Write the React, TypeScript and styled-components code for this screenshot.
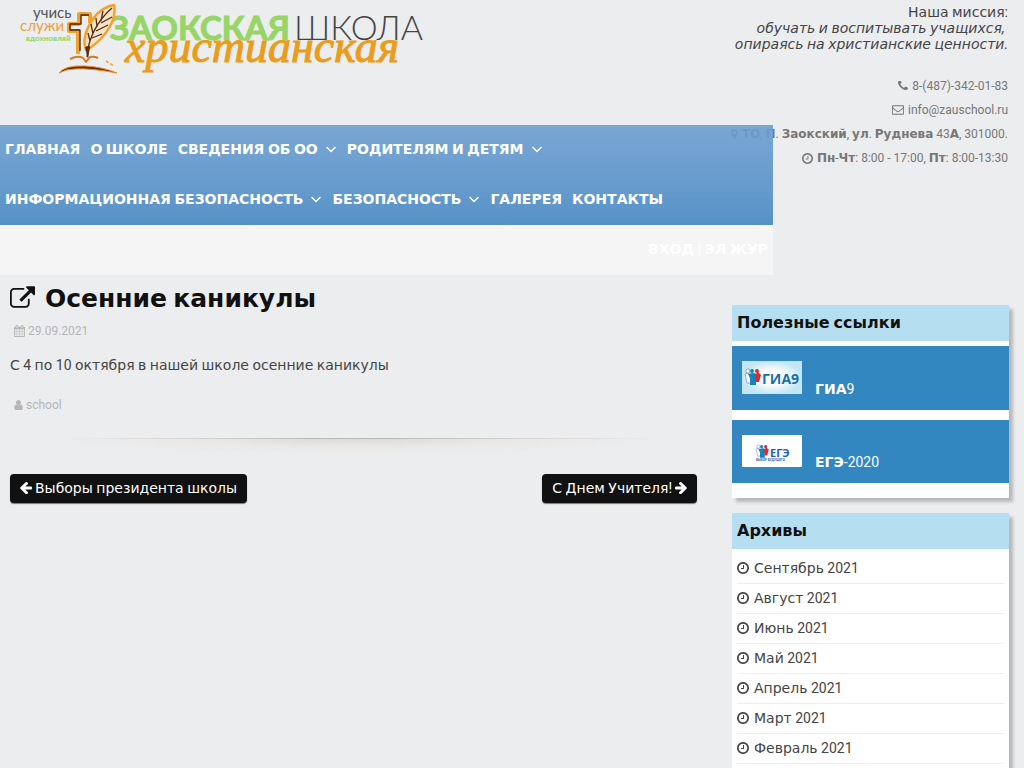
import React from "react";
import styled, { createGlobalStyle, css } from "styled-components";

const GlobalStyle = createGlobalStyle`
  *, *::before, *::after { box-sizing: border-box; }
  body {
    margin: 0;
    background: #ecedef;
    color: #444;
    font-family: Roboto, sans-serif;
    font-size: 14px;
    line-height: 24px;
  }
  a { color: inherit; text-decoration: none; }
  h1, h2, p, ul { margin: 0; padding: 0; }
  ul { list-style: none; }
`;

/* Cyrillic words use DejaVu Sans; digits, Latin and punctuation stay in Roboto. */
const Cyrillic = styled.span<{ $bold?: boolean }>`
  font-family: "DejaVu Sans", sans-serif;
  line-height: 1;
  ${(p) => p.$bold && css`font-weight: 700;`}
`;

function Mixed({ text, bold }: { text: string; bold?: boolean }) {
  return (
    <span>
      {text.split(/([\u0400-\u04FF]+)/).map((part, i) =>
        i % 2 ? (
          <Cyrillic key={i} $bold={bold}>
            {part}
          </Cyrillic>
        ) : (
          part
        )
      )}
    </span>
  );
}

const icons = {
  phone: {
    box: "192 256 1408 1408",
    d: "M1600 1240q0 27-10 70.5t-21 68.5q-21 50-122 106-94 51-186 51-27 0-53-3.5t-57.5-12.5-47-14.5-55.5-20.5-49-18q-98-35-175-83-127-79-264-216t-216-264q-48-77-83-175-3-9-18-49t-20.5-55.5-14.5-47-12.5-57.5-3.5-53q0-92 51-186 56-101 106-122 25-11 68.5-21t70.5-10q14 0 21 3 18 6 53 76 11 19 30 54t35 63.5 31 53.5q3 4 17.5 25t21.5 35.5 7 28.5q0 20-28.5 50t-62 55-62 53-28.5 46q0 9 5 22.5t8.5 20.5 14 24 11.5 19q76 137 174 235t235 174q2 1 19 11.5t24 14 20.5 8.5 22.5 5q18 0 46-28.5t53-62 55-62 50-28.5q14 0 28.5 7t35.5 21.5 25 17.5q25 15 53.5 31t63.5 35 54 30q70 35 76 53 3 7 3 21z",
  },
  envelope: {
    box: "0 128 1792 1664",
    d: "M1664 1504v-768q-32 36-69 66-268 206-426 338-51 43-83 67t-86.5 48.5-102.5 24.5h-2q-48 0-102.5-24.5t-86.5-48.5-83-67q-158-132-426-338-37-30-69-66v768q0 13 9.5 22.5t22.5 9.5h1472q13 0 22.5-9.5t9.5-22.5zm0-1051v-24.5l-.5-13-3-12.5-5.5-9-9-7.5-14-2.5h-1472q-13 0-22.5 9.5t-9.5 22.5q0 168 147 284 193 152 401 317 6 5 35 29.5t46 37.5 44.5 31.5 50.5 27.5 43 9h2q20 0 43-9t50.5-27.5 44.5-31.5 46-37.5 35-29.5q208-165 401-317 54-43 100.5-115.5t46.5-131.5zm128-37v1088q0 66-47 113t-113 47h-1472q-66 0-113-47t-47-113v-1088q0-66 47-113t113-47h1472q66 0 113 47t47 113z",
  },
  marker: {
    box: "384 128 1024 1536",
    d: "M1152 640q0-106-75-181t-181-75-181 75-75 181 75 181 181 75 181-75 75-181zm256 0q0 109-33 179l-364 774q-16 33-47.5 52t-67.5 19-67.5-19-46.5-52l-365-774q-33-70-33-179 0-212 150-362t362-150 362 150 150 362z",
  },
  clock: {
    box: "128 128 1536 1536",
    d: "M1024 544v448q0 14-9 23t-23 9h-320q-14 0-23-9t-9-23v-64q0-14 9-23t23-9h224v-352q0-14 9-23t23-9h64q14 0 23 9t9 23zm416 352q0-148-73-273t-198-198-273-73-273 73-198 198-73 273 73 273 198 198 273 73 273-73 198-198 73-273zm224 0q0 209-103 385.5t-279.5 279.5-385.5 103-385.5-103-279.5-279.5-103-385.5 103-385.5 279.5-279.5 385.5-103 385.5 103 279.5 279.5 103 385.5z",
  },
  calendar: {
    box: "64 0 1664 1792",
    d: "M192 1664h288v-288h-288v288zm352 0h320v-288h-320v288zm-352-352h288v-320h-288v320zm352 0h320v-320h-320v320zm-352-384h288v-288h-288v288zm736 736h320v-288h-320v288zm-384-736h320v-288h-320v288zm768 736h288v-288h-288v288zm-384-352h320v-320h-320v320zm-352-864v-288q0-13-9.5-22.5t-22.5-9.5h-64q-13 0-22.5 9.5t-9.5 22.5v288q0 13 9.5 22.5t22.5 9.5h64q13 0 22.5-9.5t9.5-22.5zm736 864h288v-320h-288v320zm-384-384h320v-288h-320v288zm384 0h288v-288h-288v288zm32-480v-288q0-13-9.5-22.5t-22.5-9.5h-64q-13 0-22.5 9.5t-9.5 22.5v288q0 13 9.5 22.5t22.5 9.5h64q13 0 22.5-9.5t9.5-22.5zm384-64v1280q0 52-38 90t-90 38h-1408q-52 0-90-38t-38-90v-1280q0-52 38-90t90-38h128v-96q0-66 47-113t113-47h64q66 0 113 47t47 113v96h384v-96q0-66 47-113t113-47h64q66 0 113 47t47 113v96h128q52 0 90 38t38 90z",
  },
  user: {
    box: "256 128 1280 1536",
    d: "M1536 1399q0 109-62.5 187t-150.5 78h-854q-88 0-150.5-78t-62.5-187q0-85 8.5-160.5t31.5-152 58.5-131 94-89 134.5-34.5q131 128 313 128t313-128q76 0 134.5 34.5t94 89 58.5 131 31.5 152 8.5 160.5zm-256-887q0 159-112.5 271.5t-271.5 112.5-271.5-112.5-112.5-271.5 112.5-271.5 271.5-112.5 271.5 112.5 112.5 271.5z",
  },
  external: {
    box: "64 61 1792 1536",
    d: "M1472 989v320q0 119-84.5 203.5t-203.5 84.5h-832q-119 0-203.5-84.5t-84.5-203.5v-832q0-119 84.5-203.5t203.5-84.5h704q14 0 23 9t9 23v64q0 14-9 23t-23 9h-704q-66 0-113 47t-47 113v832q0 66 47 113t113 47h832q66 0 113-47t47-113v-320q0-14 9-23t23-9h64q14 0 23 9t9 23zm384-864v512q0 26-19 45t-45 19-45-19l-176-176-652 652q-10 10-23 10t-23-10l-114-114q-10-10-10-23t10-23l652-652-176-176q-19-19-19-45t19-45 45-19h512q26 0 45 19t19 45z",
  },
  arrow: {
    box: "170 200 1500 1500",
    d: "M1664 896v128q0 53-32.5 90.5t-84.5 37.5h-704l293 294q38 36 38 90t-38 90l-75 76q-37 37-90 37-52 0-91-37l-651-652q-37-37-37-90 0-52 37-91l651-650q38-38 91-38 52 0 90 38l75 74q38 38 38 91t-38 91l-293 293h704q52 0 84.5 37.5t32.5 90.5z",
  },
};

const Glyph = styled.svg<{ $flip?: boolean }>`
  flex: none;
  display: block;
  fill: currentColor;
  ${(p) => p.$flip && css`transform: scaleX(-1);`}
`;

function Icon({ name, w, h, flip }: { name: keyof typeof icons; w: number; h: number; flip?: boolean }) {
  return (
    <Glyph viewBox={icons[name].box} width={w} height={h} $flip={flip} aria-hidden="true">
      <path d={icons[name].d} />
    </Glyph>
  );
}

const Page = styled.div`
  min-height: 100vh;
  display: flex;
  flex-direction: column;
`;

const Header = styled.header`
  display: grid;
  grid-template-columns: minmax(0, 1fr) 251px;
  grid-template-rows: 125px auto;
`;

const LogoLink = styled.a`
  grid-area: 1 / 1;
  justify-self: start;
  svg { display: block; }
`;

const HeaderInfo = styled.div`
  grid-area: 1 / 2 / span 2;
  display: flex;
  flex-direction: column;
  align-items: flex-end;
  gap: 22px;
  padding: 4px 16px 0 0;
  white-space: nowrap;
`;

const Mission = styled.p`
  line-height: 16px;
  text-align: right;
  white-space: pre;
`;

const Contacts = styled.address`
  display: flex;
  flex-direction: column;
  align-items: flex-end;
  font-size: 12px;
  font-style: normal;
  color: #777;
`;

const Contact = styled.div`
  display: flex;
  align-items: center;
  gap: 4px;
  height: 24px;
`;

const Nav = styled.nav`
  grid-area: 2 / 1;
  position: relative;
  z-index: 1;
  color: #fff;
  font-weight: 700;
  line-height: 48px;
`;

const Menu = styled.ul`
  display: flex;
  flex-wrap: wrap;
  background: linear-gradient(rgba(108, 159, 208, 0.9), rgba(87, 145, 201, 0.9) 65%, rgba(69, 136, 193, 0.9));
`;

const MenuLink = styled.a`
  display: flex;
  align-items: center;
  gap: 8px;
  height: 50px;
  padding: 0 5px 2px;
`;

const Caret = styled.svg`
  width: 10px;
  height: 8px;
  margin-right: 1px;
  fill: none;
  stroke: currentColor;
  stroke-width: 1.5;
`;

const Login = styled.div`
  display: flex;
  justify-content: flex-end;
  height: 50px;
  background: #f5f5f5;
`;

const Columns = styled.div`
  flex: 1;
  display: grid;
  grid-template-columns: minmax(0, 1fr) 277px;
  gap: 35px;
  padding: 0 15px 0 10px;
`;

const Article = styled.main`
  padding-top: 8px;
`;

const Title = styled.h1`
  display: flex;
  align-items: center;
  gap: 10px;
  height: 32px;
  color: #111;
  font-size: 25px;
  line-height: 32px;

  svg { margin-bottom: 4px; }
`;

const Meta = styled.div`
  display: flex;
  align-items: center;
  gap: 3px;
  height: 20px;
  padding-left: 4px;
  color: #b5b5b5;
  font-size: 12px;
`;

const DateMeta = styled(Meta)`
  margin-top: 6px;
`;

const Text = styled.p`
  margin: 12px 0 18px;
`;

const Divider = styled.hr`
  height: 16px;
  margin: 23px 0 20px;
  border: 0;
  border-top: 1px solid;
  border-image: linear-gradient(90deg, transparent 8%, #b8b8b5 45%, #b8b8b5 55%, transparent 94%) 1;
  background: radial-gradient(ellipse 44% 15px at 50% 0, #dadad8, #e9e8e5 50%, transparent);
`;

const Pager = styled.div`
  display: flex;
  justify-content: space-between;
`;

const PagerLink = styled.a`
  display: flex;
  align-items: center;
  gap: 3px;
  height: 29px;
  padding: 0 10px 1px;
  border-radius: 4px;
  background: #111;
  color: #fff;
  box-shadow: 0 1px 1px rgba(0, 0, 0, 0.5);
`;

const Sidebar = styled.aside`
  display: flex;
  flex-direction: column;
  gap: 15px;
  padding-top: 30px;
`;

const Panel = styled.section<{ $grow?: boolean }>`
  background: #fff;
  box-shadow: 4px 4px 3px rgba(0, 0, 0, 0.22);
  ${(p) => p.$grow && css`flex: 1;`}
`;

const PanelTitle = styled.h2`
  height: 36px;
  padding: 0 5px;
  background: #b5def0;
  color: #111;
  font-size: 16px;
  line-height: 36px;
`;

const Cards = styled.div`
  display: flex;
  flex-direction: column;
  gap: 10px;
  padding: 5px 0 15px;
`;

const Card = styled.a`
  display: flex;
  align-items: last baseline;
  gap: 13px;
  padding: 15px 10px 14px;
  background: #3387c1;
  color: #fff;
  line-height: 14px;
`;

const Archive = styled.ul`
  padding: 5px 5px 0;
`;

const ArchiveItem = styled.li`
  height: 30px;
  border-bottom: 1px solid #eee;
`;

const ArchiveLink = styled.a`
  display: flex;
  align-items: center;
  gap: 5px;
  height: 28px;
`;

function Logo() {
  return (
    <svg width="430" height="80" viewBox="0 0 430 80" role="img" aria-label="Заокская христианская школа">
      <g fontFamily="Lato, sans-serif">
        <text x="33" y="18" fontSize="15" fill="#555">учись</text>
        <text x="20" y="31" fontSize="15" fill="#e9a13c">служи</text>
        <text x="26" y="41" fontSize="8" fontWeight="900" fill="#97d567">вдохновляй</text>
        <text x="110" y="40" fontSize="33" fontWeight="700" stroke="#97d567" fill="#97d567">ЗАОКСКАЯ</text>
        <text x="294" y="40" fontSize="34" fontWeight="300" fill="#444">ШКОЛА</text>
        <text x="125" y="62" fontFamily="Liberation Serif, serif" fontSize="46" fontStyle="italic" stroke="#ea9c1b" fill="#ea9c1b">христианская</text>
      </g>
      <g fill="none" strokeLinejoin="round">
        <path d="M78 54V31H69V24H79V14H90V23M88 31V47" stroke="#f3a128" strokeWidth="4" />
        <path d="M80 51V30H70V24H81V15H89M88 32V46" stroke="#4b2108" strokeWidth="1.3" />
        <path d="M86 50C82 40 87 28 93 19C98 11 107 6 114 5C117 19 107 36 90 48Z" fill="#f4e4c8" stroke="#f3a128" strokeWidth="2.5" />
        <path d="M87 57C88 38 98 20 112 8M90 41L88 33M93 34L91 24M97 27L96 18M101 21L103 11M92 38L102 34M96 31L108 25M101 23L112 17M86 47L90 47" stroke="#5a2b0c" strokeWidth="1.3" />
        <path d="M85 47H90L88 59Z" fill="#5a2b0c" />
        <path d="M70 59Q78 55 83 58L86 62L90 57Q94 56 98 58" stroke="#df781a" strokeWidth="2" />
        <path d="M106 61L114 66" stroke="#f3a128" strokeWidth="1.5" strokeDasharray="3 2" />
      </g>
      <path d="M59 73Q65 65 85 66Q103 67 117 73Q90 68 75 69Q66 69 59 73Z" fill="#5a2b0c" stroke="#ed8b1c" strokeWidth="1" />
    </svg>
  );
}

function People() {
  return (
    <g>
      <path d="M0 5L3 4L5 7L6 14H2L1 9Z" fill="#fff" stroke="#238" strokeWidth=".4" />
      <path d="M3 5L8 4L13 5L11 9V16H5V9Z" fill="#1683bb" />
      <path d="M10 6L13 3L16 6L14 13H11Z" fill="#d92b32" />
      <circle cx="3" cy="2" r="2" fill="#fff" stroke="#238" strokeWidth=".4" />
      <circle cx="7" cy="2" r="2" fill="#1683bb" />
      <circle cx="12" cy="2" r="2" fill="#d92b32" />
    </g>
  );
}

function GiaPicture() {
  return (
    <svg width="60" height="33" viewBox="0 0 60 33" aria-hidden="true">
      <defs>
        <radialGradient id="sky">
          <stop offset="0.4" stopColor="#fff" />
          <stop offset="1" stopColor="#c3e6f5" />
        </radialGradient>
      </defs>
      <rect width="60" height="33" fill="url(#sky)" />
      <g transform="translate(3 8)"><People /></g>
      <text x="20" y="23" fontFamily="Open Sans, sans-serif" fontSize="14" fontWeight="700" fill="#1670a9">ГИА9</text>
    </svg>
  );
}

function EgePicture() {
  return (
    <svg width="60" height="32" viewBox="0 0 60 32" aria-hidden="true">
      <rect width="60" height="32" fill="#fff" />
      <g transform="translate(14 10) scale(.8)"><People /></g>
      <text x="28" y="22" fontFamily="Open Sans, sans-serif" fontSize="11" fontWeight="700" fill="#2361b0">ЕГЭ</text>
      <text x="14" y="26" fontFamily="Open Sans, sans-serif" fontSize="3" fontWeight="700" fill="#2361b0">ВЫБОР БУДУЩЕГО</text>
    </svg>
  );
}

const menu = [
  { label: "ГЛАВНАЯ" },
  { label: "О ШКОЛЕ" },
  { label: "СВЕДЕНИЯ ОБ ОО", sub: true },
  { label: "РОДИТЕЛЯМ И ДЕТЯМ", sub: true },
  { label: "ИНФОРМАЦИОННАЯ БЕЗОПАСНОСТЬ", sub: true },
  { label: "БЕЗОПАСНОСТЬ", sub: true },
  { label: "ГАЛЕРЕЯ" },
  { label: "КОНТАКТЫ" },
];

const months = ["Сентябрь", "Август", "Июнь", "Май", "Апрель", "Март", "Февраль"];

export default function App() {
  return (
    <Page>
      <GlobalStyle />
      <Header>
        <LogoLink href="#"><Logo /></LogoLink>
        <HeaderInfo>
          <Mission>
            <Mixed text="Наша миссия:" />
            {"\n"}
            <em><Mixed text={"обучать и воспитывать учащихся,\u00a0"} /></em>
            {"\n"}
            <em><Mixed text="опираясь на христианские ценности." /></em>
          </Mission>
          <Contacts>
            <Contact><Icon name="phone" w={10} h={10} /><a href="tel:84873420183">8-(487)-342-01-83</a></Contact>
            <Contact><Icon name="envelope" w={12} h={12} /><a href="mailto:info@zauschool.ru">info@zauschool.ru</a></Contact>
            <Contact><Icon name="marker" w={7} h={10} /><Mixed bold text="ТО, П. Заокский, ул. Руднева 43А, 301000." /></Contact>
            <Contact><Icon name="clock" w={11} h={11} /><Mixed bold text="Пн-Чт: 8:00 - 17:00, Пт: 8:00-13:30" /></Contact>
          </Contacts>
        </HeaderInfo>
        <Nav>
          <Menu>
            {menu.map((item) => (
              <li key={item.label}>
                <MenuLink href="#">
                  <Mixed text={item.label} />
                  {item.sub && <Caret viewBox="0 0 10 8"><path d="M.5 2L5 6.5L9.5 2" /></Caret>}
                </MenuLink>
              </li>
            ))}
          </Menu>
          <Login><MenuLink href="#"><Mixed text="ВХОД | ЭЛ ЖУР" /></MenuLink></Login>
        </Nav>
      </Header>
      <Columns>
        <Article>
          <Title><Icon name="external" w={25} h={22} /><Mixed text="Осенние каникулы" /></Title>
          <DateMeta><Icon name="calendar" w={11} h={12} /><time dateTime="2021-09-29">29.09.2021</time></DateMeta>
          <Text><Mixed text="С 4 по 10 октября в нашей школе осенние каникулы" /></Text>
          <Meta><Icon name="user" w={9} h={10} /><a href="#">school</a></Meta>
          <Divider />
          <Pager>
            <PagerLink href="#"><Icon name="arrow" w={12} h={12} /><Mixed text="Выборы президента школы" /></PagerLink>
            <PagerLink href="#"><Mixed text="С Днем Учителя!" /><Icon name="arrow" w={12} h={12} flip /></PagerLink>
          </Pager>
        </Article>
        <Sidebar>
          <Panel>
            <PanelTitle><Mixed text="Полезные ссылки" /></PanelTitle>
            <Cards>
              <Card href="#"><GiaPicture /><Mixed bold text="ГИА9" /></Card>
              <Card href="#"><EgePicture /><Mixed bold text="ЕГЭ-2020" /></Card>
            </Cards>
          </Panel>
          <Panel $grow>
            <PanelTitle><Mixed text="Архивы" /></PanelTitle>
            <Archive>
              {months.map((m) => (
                <ArchiveItem key={m}>
                  <ArchiveLink href="#"><Icon name="clock" w={12} h={12} /><Mixed text={`${m} 2021`} /></ArchiveLink>
                </ArchiveItem>
              ))}
            </Archive>
          </Panel>
        </Sidebar>
      </Columns>
    </Page>
  );
}
